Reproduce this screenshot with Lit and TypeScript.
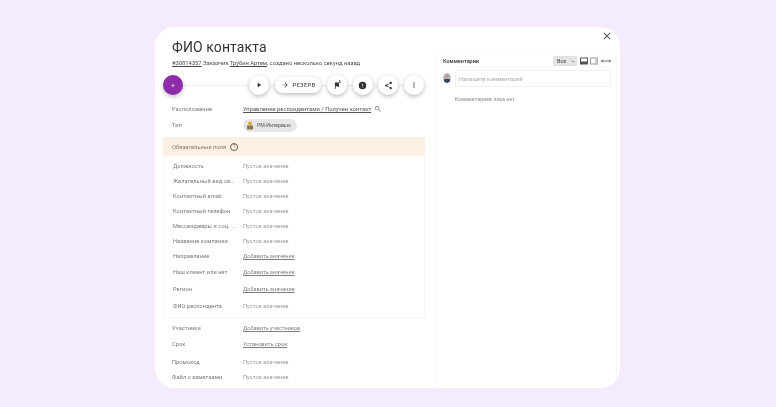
import { LitElement, html, css, svg } from "lit";
import { customElement } from "lit/decorators.js";

type Row = { label: string; value: string; link?: boolean; h: number };

const required: Row[] = [
  { label: "Должность", value: "Пустое значение", h: 15 },
  { label: "Желательный вид св...", value: "Пустое значение", h: 15 },
  { label: "Контактный email", value: "Пустое значение", h: 15 },
  { label: "Контактный телефон", value: "Пустое значение", h: 15 },
  { label: "Мессенджеры и соц. ...", value: "Пустое значение", h: 15 },
  { label: "Название компании", value: "Пустое значение", h: 15 },
  { label: "Направление", value: "Добавить значение", link: true, h: 16 },
  { label: "Наш клиент или нет", value: "Добавить значение", link: true, h: 16 },
  { label: "Регион", value: "Добавить значение", link: true, h: 17 },
  { label: "ФИО респондента", value: "Пустое значение", h: 17 },
];

const icon = (d: string, size = 8, fill = "#333") => html`<svg width=${size} height=${size} viewBox="0 0 24 24" fill=${fill}>${svg`<path d=${d}></path>`}</svg>`;

@customElement("app-root")
export class AppRoot extends LitElement {
  static styles = css`
    :host {
      display: block;
      width: 776px;
      height: 407px;
      box-sizing: border-box;
      padding: 27px 156px 19px 155px;
      background: #f5ebfe;
      font-family: Roboto, "Noto Sans", sans-serif;
      color: #333;
      overflow: hidden;
    }
    .card {
      height: 361px;
      background: #fff;
      border-radius: 20px;
      display: flex;
      overflow: hidden;
      position: relative;
      filter: blur(0.3px);
    }
    .left { width: 280px; flex: none; box-sizing: border-box; padding: 10px 0 0 8px; }
    .title { margin: 0 0 0 9px; font-size: 14px; line-height: 20px; font-weight: 400; letter-spacing: 0.1px; color: #333; }
    .meta { margin: 1px 0 0 9px; font-size: 5.8px; line-height: 10px; color: #4a4a4a; white-space: nowrap; }
    .meta u { text-decoration: underline; }
    .actions {
      position: relative; height: 20px; margin-top: 7px;
      display: flex; align-items: center; width: 261px;
    }
    .actions::before { content: ""; position: absolute; left: 10px; right: 0; top: 10px; height: 1px; background: #eeeeee; }
    .fab, .btn {
      position: relative; flex: none; width: 20px; height: 20px; border-radius: 50%; background: #fff;
      box-shadow: 0 1.5px 4px rgba(0,0,0,.28); display: flex; align-items: center; justify-content: center;
    }
    .fab { background: #8e2ba8; color: #e8cdf0; font-size: 8px; margin-right: 66px; }
    .pill {
      position: relative; flex: none; width: 46px; height: 16px; border-radius: 8px; margin: 0 6px;
      background: #fff; box-shadow: 0 1.5px 4px rgba(0,0,0,.28);
      display: flex; align-items: center; justify-content: center; gap: 4px;
      font-size: 5.8px; font-weight: 500; letter-spacing: .3px; color: #555;
    }
    .btn + .btn { margin-left: 5.7px; }
    .flag sup { position: absolute; left: 11.5px; top: 5px; font-size: 3.6px; line-height: 4px; font-weight: 700; color: #333; }
    .row { display: flex; align-items: center; padding-left: 9px; font-size: 5.6px; color: #666; white-space: nowrap; }
    .row .k { width: 71px; flex: none; color: #777; letter-spacing: .1px; }
    .row .v { color: #999; letter-spacing: .1px; }
    .row .v.link { color: #808080; text-decoration: underline; letter-spacing: 0; }
    .loc { margin-top: 6px; height: 16px; }
    .loc .v { color: #555; text-decoration: underline; font-size: 5.8px; letter-spacing: 0; display: flex; align-items: center; }
    .loc svg { margin-left: 3px; }
    .type { height: 16px; }
    .chip {
      display: inline-flex; align-items: center; gap: 3px; height: 13px; width: 54px; box-sizing: border-box;
      padding-left: 3px; border-radius: 7px; background: #e6e6e6; font-size: 5.2px; color: #555;
    }
    .panel {
      margin-top: 4px; width: 262px; box-sizing: border-box;
      border: 1px solid #f5f5f5; border-top: none; border-radius: 2px; padding-bottom: 3px;
    }
    .panel-h {
      height: 19px; background: #fcf0e2; display: flex; align-items: center; gap: 3px;
      padding-left: 9px; font-size: 5.8px; color: #8a7a66; margin: 0 -1px;
      margin-bottom: 2px;
    }
    .q {
      width: 6px; height: 6px; border-radius: 50%; border: 1px solid #6d5a44; display: flex; align-items: center;
      justify-content: center; font-size: 5px; line-height: 1; color: #6d5a44; margin-left: 1px;
    }
    .panel .row { padding-left: 9px; }
    .panel .row .k { width: 70px; }
    .foot { margin-top: 2px; }
    .right {
      position: absolute; left: 280px; top: 22px; width: 182px; height: 340px; box-sizing: border-box;
      border: 1px solid #f7f7f7; border-radius: 3px; padding: 6px 5px 0 7px;
    }
    .rh { display: flex; align-items: center; height: 10px; font-size: 5.5px; font-weight: 500; color: #333; }
    .rh .sp { flex: 1; }
    .filter {
      width: 24px; height: 10px; background: #e2e2e2; border-radius: 1px; font-size: 5.4px; color: #555;
      display: flex; align-items: center; justify-content: space-between; box-sizing: border-box; padding: 0 3px 0 4px;
      margin-right: 3px;
    }
    .filter i { width: 0; height: 0; border: 1.8px solid transparent; border-top-color: #444; border-bottom: none; }
    .rh svg { margin-right: 2px; }
    .rh svg.last { margin: 0 0 0 1px; }
    .inputrow { display: flex; align-items: center; margin-top: 4px; gap: 4px; }
    .av { width: 8px; height: 10px; flex: none; border-radius: 50%; overflow: hidden; display: block; margin-top: -2px; }
    .input {
      flex: 1; height: 15px; border: 1px solid #f0f0f0; border-radius: 1px; display: flex; align-items: center;
      padding-left: 3px; font-size: 5.4px; color: #a8a8a8; letter-spacing: .1px;
    }
    .none { margin: 9px 0 0 12px; font-size: 4.9px; font-weight: 500; color: #999; letter-spacing: .2px; }
    .close { position: absolute; right: 7px; top: 3px; display: block; }
  `;

  private renderRow(r: Row) {
    return html`<div class="row" style="height:${r.h}px">
      <span class="k">${r.label}</span>
      <span class="v ${r.link ? "link" : ""}">${r.value}</span>
    </div>`;
  }

  render() {
    return html`<div class="card">
      <div class="left">
        <h1 class="title">ФИО контакта</h1>
        <div class="meta"><u>#30814357</u> Заказчик <u>Трубин Артем</u>, создано несколько секунд назад</div>
        <div class="actions">
          <div class="fab">+</div>
          <div class="btn">${icon("M8 5v14l11-7z")}</div>
          <div class="pill">${icon("M12 4l-1.4 1.4L16.2 11H4v2h12.2l-5.6 5.6L12 20l8-8z", 8, "#444")}<span>РЕЗЕРВ</span></div>
          <div class="btn flag">${icon("M14.4 6L14 4H5v17h2v-7h5.6l.4 2h3V6z", 9)}<sup>A</sup></div>
          <div class="btn">${icon("M12 2a10 10 0 100 20 10 10 0 000-20zm1 15h-2v-2h2zm0-4h-2V7h2z", 9)}</div>
          <div class="btn">${icon("M18 16a3 3 0 00-2 .8L8.9 12.7a3 3 0 000-1.4L16 7.2A3 3 0 1015 5c0 .2 0 .5.1.7L8 9.8a3 3 0 100 4.4l7.1 4.1a3 3 0 102.9-2.3z", 9)}</div>
          <div class="btn">${icon("M12 8a2 2 0 100-4 2 2 0 000 4zm0 2a2 2 0 100 4 2 2 0 000-4zm0 6a2 2 0 100 4 2 2 0 000-4z", 8)}</div>
        </div>
        <div class="row loc">
          <span class="k">Расположение</span>
          <span class="v">Управление респондентами / Получен контакт ${icon("M15.5 14h-.8l-.3-.3A6.5 6.5 0 109.5 16c1.6 0 3.1-.6 4.2-1.6l.3.3v.8l5 5 1.5-1.5zm-6 0a4.5 4.5 0 110-9 4.5 4.5 0 010 9z", 8, "#777")}</span>
        </div>
        <div class="row type">
          <span class="k">Тип</span>
          <span class="chip">
            <svg width="8" height="9" viewBox="0 0 8 9"><circle cx="4" cy="2.5" r="2" fill="#e0a83a"></circle><rect x="1" y="4.5" width="6" height="4" fill="#8a7a4a"></rect></svg>
            РМ-Интервью
          </span>
        </div>
        <div class="panel">
          <div class="panel-h">Обязательные поля <span class="q">?</span></div>
          ${required.map((r) => this.renderRow(r))}
        </div>
        <div class="foot">
          ${this.renderRow({ label: "Участники", value: "Добавить участников", link: true, h: 16 })}
          ${this.renderRow({ label: "Срок", value: "Установить срок", link: true, h: 16 })}
          ${this.renderRow({ label: "Промокод", value: "Пустое значение", h: 20 })}
          ${this.renderRow({ label: "Файл с заметками", value: "Пустое значение", h: 10 })}
        </div>
      </div>
      <svg class="close" width="12" height="12" viewBox="0 0 24 24" fill="#555"><path d="M19 6.4L17.6 5 12 10.6 6.4 5 5 6.4 10.6 12 5 17.6 6.4 19 12 13.4 17.6 19 19 17.6 13.4 12z"></path></svg>
      <div class="right">
        <div class="rh">
          <span>Комментарии</span><span class="sp"></span>
          <span class="filter">Все<i></i></span>
          <svg width="8" height="8" viewBox="0 0 8 8"><rect x=".5" y="1" width="7" height="6" fill="none" stroke="#555"></rect><rect x=".5" y="4.5" width="7" height="2.5" fill="#555"></rect></svg>
          <svg width="8" height="8" viewBox="0 0 8 8"><rect x=".5" y="1" width="7" height="6" fill="none" stroke="#999"></rect><rect x="5" y="1" width="2.5" height="6" fill="#ccc"></rect></svg>
          <svg class="last" width="10" height="8" viewBox="0 0 10 8" fill="none" stroke="#555" stroke-width=".8"><path d="M0 4h10M2 2.5L.5 4 2 5.5M8 2.5L9.5 4 8 5.5"></path></svg>
        </div>
        <div class="inputrow">
          <svg class="av" viewBox="0 0 8 10"><rect width="8" height="10" fill="#b9c4d2"></rect><circle cx="4" cy="3.5" r="2.2" fill="#c79a82"></circle><rect x="1" y="6" width="6" height="4" fill="#3c4a60"></rect></svg>
          <div class="input">Напишите комментарий</div>
        </div>
        <div class="none">Комментариев пока нет</div>
      </div>
    </div>`;
  }
}
